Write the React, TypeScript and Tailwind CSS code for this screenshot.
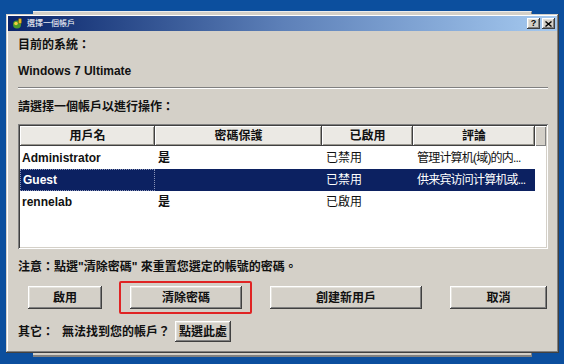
import React from 'react';

const FONT = { fontFamily: '"Liberation Sans", "Noto Sans CJK TC", sans-serif' };

// classic raised 3D edge
const raised =
  'bg-[#d4d0c8] shadow-[inset_-1px_-1px_#404040,inset_1px_1px_#ffffff,inset_-2px_-2px_#808080,inset_2px_2px_#e4e2dc]';

const rows = [
  { name: 'Administrator', pwd: '是', enabled: '已禁用', note: '管理计算机(域)的内...', selected: false },
  { name: 'Guest', pwd: '', enabled: '已禁用', note: '供来宾访问计算机或...', selected: true },
  { name: 'rennelab', pwd: '是', enabled: '已啟用', note: '', selected: false },
];

const cols = [
  { label: '用戶名', w: 'w-[135px]' },
  { label: '密碼保護', w: 'w-[167px]' },
  { label: '已啟用', w: 'w-[91px]' },
  { label: '評論', w: 'w-[122px]' },
];

const Btn = ({ label, w, h = 'h-[23px]' }: { label: string; w: string; h?: string }) => (
  <div className={`${raised} ${w} ${h} flex items-center justify-center text-[12px] font-bold text-[#111]`}>
    {label}
  </div>
);

export default function App() {
  return (
    <div className="relative w-[564px] h-[364px] overflow-hidden bg-[#0c4f9e]" style={FONT}>
      {/* window behind */}
      <div className="absolute left-[33px] top-[11px] w-[499px] h-[346px] bg-[#d4d0c8] border-t border-t-[#ececec] border-b-2 border-b-[#808080] border-r border-r-[#808080]" />

      {/* dialog */}
      <div className="absolute left-[6px] top-[14px] w-[553px] h-[339px] bg-[#d4d0c8] shadow-[inset_-1px_-1px_#404040,inset_1px_1px_#d4d0c8,inset_-2px_-2px_#808080,inset_2px_2px_#ffffff] p-[2px] flex flex-col">
        {/* title bar */}
        <div className="h-[15px] flex items-center bg-gradient-to-r from-[#0a246a] via-[#5d80b8] to-[#a6caf0] pl-[4px] pr-[2px]">
          <svg width="11" height="11" viewBox="0 0 11 11">
            <circle cx="5" cy="6.5" r="4" fill="#4a9a2a" />
            <circle cx="4" cy="5.5" r="1.8" fill="#f2d040" />
            <rect x="6.5" y="0.5" width="3" height="5" rx="1" fill="#e8b820" stroke="#7a5a10" strokeWidth="0.6" />
          </svg>
          <span className="ml-[4px] text-[8px] leading-none text-white">選擇一個帳戶</span>
          <div className="ml-auto flex gap-[2px]">
            <div className={`${raised} w-[13px] h-[11px] flex items-center justify-center text-[9px] font-bold leading-none text-black`}>?</div>
            <div className={`${raised} w-[13px] h-[11px] flex items-center justify-center`}>
              <svg width="7" height="6" viewBox="0 0 7 6">
                <path d="M0.5 0.5 L6.5 5.5 M6.5 0.5 L0.5 5.5" stroke="#000" strokeWidth="1.4" />
              </svg>
            </div>
          </div>
        </div>

        {/* body */}
        <div className="flex flex-col pl-[10px] pr-[9px] text-[#111]">
          <div className="mt-[6px] h-[16px] leading-[16px] text-[12px] font-bold">目前的系統：</div>
          <div className="mt-[10px] h-[16px] leading-[16px] text-[12px] font-bold">Windows 7 Ultimate</div>
          <div className="mt-[8px] h-[2px] border-t border-t-[#808080] border-b border-b-white" />
          <div className="mt-[10px] h-[16px] leading-[16px] text-[12px] font-bold">請選擇一個帳戶以進行操作：</div>

          {/* list view */}
          <div className="mt-[9px] h-[125px] bg-white shadow-[inset_1px_1px_#808080,inset_-1px_-1px_#ffffff,inset_2px_2px_#404040,inset_-2px_-2px_#d4d0c8] p-[2px] flex flex-col">
            <div className="flex h-[20px]">
              {cols.map((c) => (
                <div
                  key={c.label}
                  className={`${c.w} h-full flex items-center justify-center text-[12px] font-bold bg-[#ebe9e4] shadow-[inset_-1px_-1px_#404040,inset_1px_1px_#ffffff,inset_-2px_-2px_#9a9890]`}
                >
                  {c.label}
                </div>
              ))}
              <div className="flex-1 h-full bg-[#d4d0c8] shadow-[inset_1px_1px_#ffffff,inset_-1px_-1px_#808080]" />
            </div>
            <div className="mt-[1px] flex flex-col">
              {rows.map((r) => (
                <div
                  key={r.name}
                  className={`flex w-[515px] h-[22px] items-center text-[12px] ${r.selected ? 'bg-[#0c2161] text-white' : 'text-[#111]'}`}
                >
                  <div className={`w-[135px] h-full flex items-center pl-[2px] font-bold ${r.selected ? 'border border-dotted border-[#8a94b8]' : ''}`}>
                    {r.name}
                  </div>
                  <div className="w-[167px] pl-[3px] font-bold">{r.pwd}</div>
                  <div className="w-[91px] pl-[4px]">{r.enabled}</div>
                  <div className="w-[122px] pl-[4px] whitespace-nowrap tracking-[-0.8px]">{r.note}</div>
                </div>
              ))}
            </div>
          </div>

          <div className="mt-[10px] h-[16px] leading-[16px] text-[12px] font-bold">注意：點選"清除密碼" 來重置您選定的帳號的密碼。</div>

          {/* action buttons */}
          <div className="mt-[6px] flex items-center h-[33px]">
            <div className="ml-[10px]">
              <Btn label="啟用" w="w-[74px]" />
            </div>
            <div className="ml-[17px] w-[133px] h-[33px] border-2 border-[#e02424] rounded-[2px] pl-[9px] pt-[3px]">
              <Btn label="清除密碼" w="w-[112px]" />
            </div>
            <div className="ml-[18px]">
              <Btn label="創建新用戶" w="w-[152px]" />
            </div>
            <div className="ml-[28px]">
              <Btn label="取消" w="w-[97px]" />
            </div>
          </div>

          {/* other */}
          <div className="mt-[7px] flex items-center h-[21px] text-[12px] font-bold">
            <span className="w-[44px]">其它：</span>
            <span className="w-[113px]">無法找到您的帳戶？</span>
            <Btn label="點選此處" w="w-[56px]" h="h-[21px]" />
          </div>
        </div>
      </div>
    </div>
  );
}
